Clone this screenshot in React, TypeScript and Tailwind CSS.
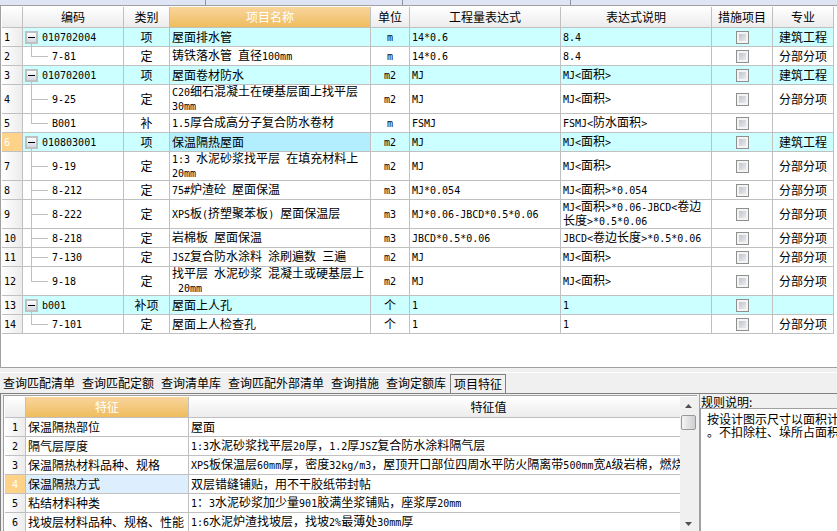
import { Fragment } from 'react'
import clsx from 'clsx'

type Item = {
  code: string
  kind: string
  name: string
  unit: string
  expr: string
  note: string
  major: string
  parent?: boolean
  last?: boolean
}

const items: Item[] = [
  { code: '010702004', kind: '项', name: '屋面排水管', unit: 'm', expr: '14*0.6', note: '8.4', major: '建筑工程', parent: true },
  { code: '7-81', kind: '定', name: '铸铁落水管 直径100mm', unit: 'm', expr: '14*0.6', note: '8.4', major: '分部分项', last: true },
  { code: '010702001', kind: '项', name: '屋面卷材防水', unit: 'm2', expr: 'MJ', note: 'MJ<面积>', major: '建筑工程', parent: true },
  { code: '9-25', kind: '定', name: 'C20细石混凝土在硬基层面上找平层\n30mm', unit: 'm2', expr: 'MJ', note: 'MJ<面积>', major: '分部分项' },
  { code: 'B001', kind: '补', name: '1.5厚合成高分子复合防水卷材', unit: 'm', expr: 'FSMJ', note: 'FSMJ<防水面积>', major: '', last: true },
  { code: '010803001', kind: '项', name: '保温隔热屋面', unit: 'm2', expr: 'MJ', note: 'MJ<面积>', major: '建筑工程', parent: true },
  { code: '9-19', kind: '定', name: '1:3 水泥砂浆找平层 在填充材料上\n20mm', unit: 'm2', expr: 'MJ', note: 'MJ<面积>', major: '分部分项' },
  { code: '8-212', kind: '定', name: '75#炉渣砼 屋面保温', unit: 'm3', expr: 'MJ*0.054', note: 'MJ<面积>*0.054', major: '分部分项' },
  { code: '8-222', kind: '定', name: 'XPS板(挤塑聚苯板) 屋面保温层', unit: 'm3', expr: 'MJ*0.06-JBCD*0.5*0.06', note: 'MJ<面积>*0.06-JBCD<卷边\n长度>*0.5*0.06', major: '分部分项' },
  { code: '8-218', kind: '定', name: '岩棉板 屋面保温', unit: 'm3', expr: 'JBCD*0.5*0.06', note: 'JBCD<卷边长度>*0.5*0.06', major: '分部分项' },
  { code: '7-130', kind: '定', name: 'JSZ复合防水涂料 涂刷遍数 三遍', unit: 'm2', expr: 'MJ', note: 'MJ<面积>', major: '分部分项' },
  { code: '9-18', kind: '定', name: '找平层 水泥砂浆 混凝土或硬基层上\n 20mm', unit: 'm2', expr: 'MJ', note: 'MJ<面积>', major: '分部分项', last: true },
  { code: 'b001', kind: '补项', name: '屋面上人孔', unit: '个', expr: '1', note: '1', major: '', parent: true },
  { code: '7-101', kind: '定', name: '屋面上人检查孔', unit: '个', expr: '1', note: '1', major: '分部分项', last: true },
]

const features = [
  ['保温隔热部位', '屋面'],
  ['隔气层厚度', '1:3水泥砂浆找平层20厚，1.2厚JSZ复合防水涂料隔气层'],
  ['保温隔热材料品种、规格', 'XPS板保温层60mm厚，密度32kg/m3，屋顶开口部位四周水平防火隔离带500mm宽A级岩棉，燃烧'],
  ['保温隔热方式', '双层错缝铺贴，用不干胶纸带封帖'],
  ['粘结材料种类', '1：3水泥砂浆加少量901胶满坐浆铺贴，座浆厚20mm'],
  ['找坡层材料品种、规格、性能', '1:6水泥炉渣找坡层，找坡2%最薄处30mm厚'],
]

const tabs = ['查询匹配清单', '查询匹配定额', '查询清单库', '查询匹配外部清单', '查询措施', '查询定额库']

const th = 'h-[21px] border-r border-b border-[#c0c0c0] bg-linear-to-b from-white to-[#ececec] p-0 font-normal'
const thActive = 'h-[21px] border-r border-b border-[#c0c0c0] bg-linear-to-b from-[#f9d59c] to-[#efbd5c] p-0 font-normal text-white'
const td = 'border-r border-b border-[#c0c0c0] p-0'
const rowNo = 'bg-linear-to-r from-white to-[#ececec]'

// Latin runs are set in a half-width face so they line up with the Chinese grid
function Text({ children }: { children: string }) {
  return (
    <span className="whitespace-pre">
      {children.split(/([\x20-\x7e]+)/).map((part, i) =>
        i % 2 ? (
          <span key={i} className="font-['DejaVu_Sans_Mono',monospace] text-[10px]">{part}</span>
        ) : (
          <Fragment key={i}>{part}</Fragment>
        )
      )}
    </span>
  )
}

function TreeCell({ item }: { item: Item }) {
  if (item.parent) {
    return (
      <div className="flex h-full items-stretch">
        <div className="ml-0.5 flex w-[13px] flex-col items-center">
          <div className="h-[3px]" />
          <button
            aria-label={`折叠 ${item.code}`}
            className="flex size-[13px] shrink-0 items-center justify-center border-2 border-[#c0c0c0] bg-linear-to-b from-white to-[#d4d7e4]"
          >
            <span className="h-px w-[7px] bg-black" />
          </button>
          <div className="w-px flex-1 bg-[#c0c0c0]" />
        </div>
        <div className="ml-1 flex items-center"><Text>{item.code}</Text></div>
      </div>
    )
  }
  return (
    <div className="flex h-full items-stretch">
      <div className="ml-2 flex w-[17px] flex-col">
        <div className="flex-1 border-b border-l border-[#c0c0c0]" />
        <div className={clsx('flex-1', !item.last && 'border-l border-[#c0c0c0]')} />
      </div>
      <div className="ml-1 flex items-center"><Text>{item.code}</Text></div>
    </div>
  )
}

function ItemTable() {
  return (
    <table className="w-full table-fixed border-separate border-spacing-0">
      <colgroup>
        <col className="w-[21px]" />
        <col className="w-[101px]" />
        <col className="w-[46px]" />
        <col />
        <col className="w-[39px]" />
        <col className="w-[151px]" />
        <col className="w-[151px]" />
        <col className="w-[61px]" />
        <col className="w-[61px]" />
      </colgroup>
      <thead>
        <tr>
          <th className={th} />
          <th className={th}>编码</th>
          <th className={th}>类别</th>
          <th className={thActive}>项目名称</th>
          <th className={th}>单位</th>
          <th className={th}>工程量表达式</th>
          <th className={th}>表达式说明</th>
          <th className={th}>措施项目</th>
          <th className={th}>专业</th>
        </tr>
      </thead>
      <tbody>
        {items.map((item, i) => {
          const selected = i === 5
          const tall = item.name.includes('\n') || item.note.includes('\n')
          return (
            <tr key={item.code} className={clsx(tall ? 'h-[29px]' : 'h-[19px]', item.parent && 'bg-[#ccffff]')}>
              <td className={clsx(td, 'pl-0.5', selected ? 'bg-[#ffd28a] text-white' : rowNo)}>
                <Text>{String(i + 1)}</Text>
              </td>
              <td className={clsx(td, tall ? 'h-[29px]' : 'h-[19px]')}>
                <TreeCell item={item} />
              </td>
              <td className={clsx(td, 'text-center')}>{item.kind}</td>
              <td className={clsx(td, 'pl-0.5', selected && 'bg-[#b3eeff]')}><Text>{item.name}</Text></td>
              <td className={clsx(td, 'text-center')}><Text>{item.unit}</Text></td>
              <td className={clsx(td, 'pl-0.5')}><Text>{item.expr}</Text></td>
              <td className={clsx(td, 'pl-0.5')}><Text>{item.note}</Text></td>
              <td className={td}>
                <input
                  type="checkbox"
                  aria-label={`措施项目 ${item.code}`}
                  className="mx-auto block size-[13px] appearance-none border border-[#8e8f8f] bg-linear-to-br from-[#b4b9c4] to-[#f6f6f6] ring-2 ring-[#f4f4f4] ring-inset"
                />
              </td>
              <td className={clsx(td, 'text-center')}>{item.major}</td>
            </tr>
          )
        })}
      </tbody>
    </table>
  )
}

// The value column is wider than its pane and runs under the scroll bar
function FeatureTable() {
  return (
    <table className="w-[784px] table-fixed border-separate border-spacing-0">
      <colgroup>
        <col className="w-[21px]" />
        <col className="w-[163px]" />
        <col />
      </colgroup>
      <thead>
        <tr>
          <th className={th} />
          <th className={thActive}>特征</th>
          <th className={th}>特征值</th>
        </tr>
      </thead>
      <tbody>
        {features.map(([name, value], i) => (
          <tr key={name} className="h-[19px]">
            <td className={clsx(td, 'text-center', i === 3 ? 'bg-[#ffd28a] text-white' : rowNo)}>
              <Text>{String(i + 1)}</Text>
            </td>
            <td className={clsx(td, 'pl-0.5', i === 3 && 'bg-[#ddeeff]')}><Text>{name}</Text></td>
            <td className={clsx(td, 'pl-0.5')}><Text>{value}</Text></td>
          </tr>
        ))}
      </tbody>
    </table>
  )
}

function ScrollBar() {
  return (
    <div className="flex w-[17px] shrink-0 flex-col items-center bg-[#f0f0f0]">
      <button aria-label="向上滚动" className="flex h-[18px] w-full items-center justify-center">
        <svg width="7" height="4" viewBox="0 0 7 4"><path d="M3.5 0L7 4H0z" fill="#505050" /></svg>
      </button>
      <div className="flex-1">
        <div className="size-[15px] rounded-xs border border-[#989898] bg-linear-to-r from-[#f5f5f5] to-[#cfcfd2]" />
      </div>
      <button aria-label="向下滚动" className="flex h-3.5 w-full items-center justify-center">
        <svg width="7" height="4" viewBox="0 0 7 4"><path d="M0 0H7L3.5 4z" fill="#505050" /></svg>
      </button>
    </div>
  )
}

export default function App() {
  return (
    <div className="flex h-screen flex-col overflow-hidden bg-[#f0f0f0] font-['Noto_Sans_CJK_SC',sans-serif] text-[12px] leading-[12px] text-black">
      <div className="flex h-[5px] shrink-0 bg-[#dfe5f5]">
        <div className="w-[206px] border-r border-[#8f95a5]" />
        <div className="w-[197px] border-r border-[#8f95a5]" />
        <div className="w-[168px] border-r border-[#8f95a5]" />
      </div>

      <div className="shrink-0 border-y border-l border-[#a0a0a0] bg-white pt-px pr-[3px] pb-[33px] pl-px">
        <ItemTable />
      </div>
      <div className="h-1 shrink-0" />
      <div className="h-px shrink-0 bg-white" />

      <div className="flex h-5 shrink-0 items-end gap-[7px] pl-[3px]">
        {tabs.map((tab) => (
          <button key={tab} className="mb-1 whitespace-nowrap">{tab}</button>
        ))}
        <button className="-ml-[3px] h-[19px] border border-b-0 border-[#808080] px-[3px] whitespace-nowrap">项目特征</button>
      </div>

      <div className="flex min-h-0 flex-1 border-t border-l border-[#808080]">
        <div className="flex min-w-0 flex-1 border-r border-[#a0a0a0] pt-px pr-0.5">
          <div className="ml-0.5 flex min-w-0 flex-1 border-t border-l border-[#a0a0a0] bg-white pt-px pl-px">
            <div className="min-w-0 flex-1 overflow-hidden"><FeatureTable /></div>
            <ScrollBar />
          </div>
        </div>
        <div className="flex w-[137px] shrink-0 flex-col">
          <div className="h-[14px] pt-0.5 pl-px">规则说明:</div>
          <div className="flex-1 overflow-hidden border-t border-l border-[#a0a0a0] bg-white pt-[3px] pl-1.5 leading-[13px] whitespace-pre">
            {'按设计图示尺寸以面积计\n。不扣除柱、垛所占面积'}
          </div>
        </div>
      </div>
    </div>
  )
}
